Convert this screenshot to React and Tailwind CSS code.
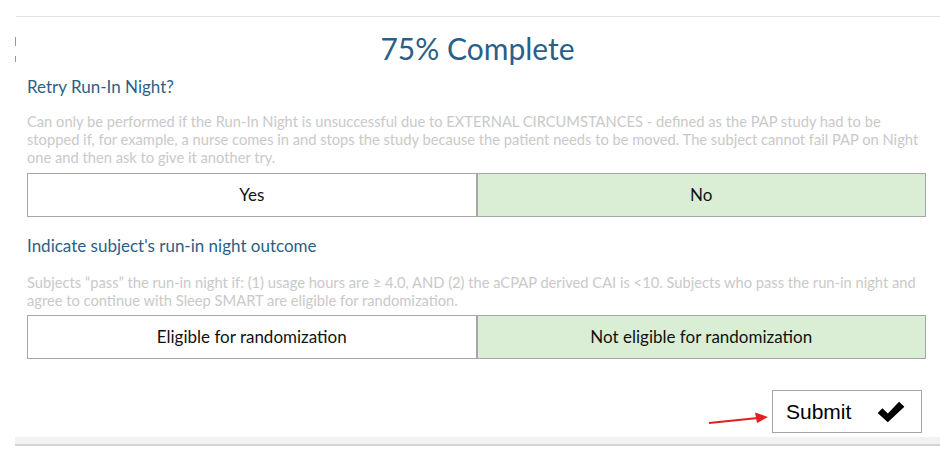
import React from 'react'

const Choice = ({ label, selected }) => (
  <button
    className={
      'flex-1 h-[44px] border-[1.5px] border-[#a6a6a6] text-[17px] text-[#111] ' +
      (selected ? 'bg-[#d9eed5]' : 'bg-white')
    }
  >
    {label}
  </button>
)

const App = () => {
  return (
    <div className="w-[940px] h-[454px] bg-white overflow-hidden font-['Lato','Open_Sans',sans-serif]">
      <div className="h-[16px]" />
      <div className="ml-[16px] border-t border-[#e2e2e2] flex">
        <div className="w-[1px] -ml-[1px] flex flex-col pt-[20px] gap-[10px]">
          <div className="h-[9px] w-px bg-[#999]" />
          <div className="h-[6px] w-px bg-[#999]" />
        </div>
        <div className="flex-1 pl-[11px] pr-[14px]">
          <h1 className="text-center text-[30px] leading-[36px] text-[#2a5f87] pt-[13px] pl-[2px]">75% Complete</h1>

          <h2 className="mt-[10px] text-[17px] leading-[22px] text-[#2c5f86]">Retry Run-In Night?</h2>
          <p className="mt-[14px] text-[14.7px] leading-[18px] text-[#c9c9c9]">
            Can only be performed if the Run-In Night is unsuccessful due to EXTERNAL CIRCUMSTANCES - defined as the PAP study had to be stopped if, for example, a nurse comes in and stops the study because the patient needs to be moved. The subject cannot fail PAP on Night one and then ask to give it another try.
          </p>
          <div className="flex mt-[7px]">
            <Choice label="Yes" />
            <Choice label="No" selected />
          </div>

          <h2 className="mt-[18px] text-[17px] leading-[22px] text-[#2c5f86]">Indicate subject's run-in night outcome</h2>
          <p className="mt-[16px] text-[14.7px] leading-[18px] text-[#c9c9c9]">
            Subjects “pass” the run-in night if: (1) usage hours are ≥ 4.0, AND (2) the aCPAP derived CAI is &lt;10. Subjects who pass the run-in night and agree to continue with Sleep SMART are eligible for randomization.
          </p>
          <div className="flex mt-[6px]">
            <Choice label="Eligible for randomization" />
            <Choice label="Not eligible for randomization" selected />
          </div>

          <div className="flex justify-end items-end mt-[31px] pr-[4px] gap-[2px]">
            <svg width="62" height="16" viewBox="0 0 62 16" className="mb-[6px]">
              <line x1="1" y1="12" x2="50" y2="7" stroke="#e02020" strokeWidth="2" />
              <polygon points="60,6 47,1.5 49,12" fill="#e02020" />
            </svg>
            <button className="w-[150px] h-[43px] border border-[#a6a6a6] bg-white flex items-center pl-[13px] pr-[15px] justify-between font-['Liberation_Sans',Arial,sans-serif] text-[21px] text-black">
              <span>Submit</span>
              <svg width="30" height="24" viewBox="0 0 28 22">
                <path d="M1.5 12 L6 7.5 L11 12.5 L21.5 1.5 L26.5 6 L11 20.5 Z" fill="#000" />
              </svg>
            </button>
          </div>
        </div>
      </div>
      <div className="mt-[4px] ml-[15px] h-[9px] bg-[#f2f2f2] border-b-2 border-[#d4d4d4]" />
    </div>
  )
}

export default App
